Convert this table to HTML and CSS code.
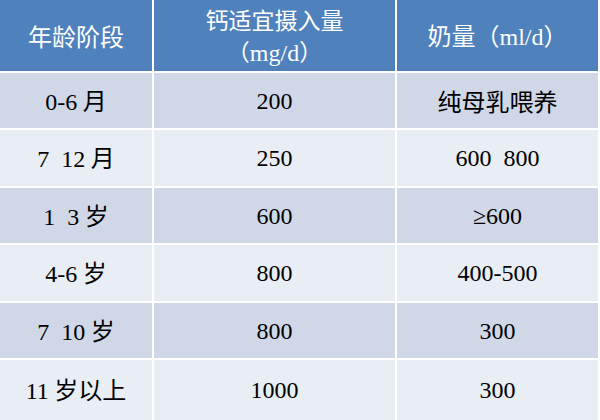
FILE: index.html
```html
<!DOCTYPE html>
<html>
<head>
<meta charset="utf-8">
<title>钙适宜摄入量</title>
<link rel="stylesheet" href="styles.css">
</head>
<body>
<div class="table">
  <div class="cell head"><span>年龄阶段</span></div>
  <div class="cell head two"><span>钙适宜摄入量<br>（<span class="num">mg/d</span>）</span></div>
  <div class="cell head"><span>奶量（<span class="num">ml/d</span>）</span></div>

  <div class="cell dark"><span><span class="num">0-6</span> 月</span></div>
  <div class="cell dark"><span class="num">200</span></div>
  <div class="cell dark"><span>纯母乳喂养</span></div>

  <div class="cell light"><span><span class="num">7&nbsp;&nbsp;12</span> 月</span></div>
  <div class="cell light"><span class="num">250</span></div>
  <div class="cell light"><span class="num">600&nbsp;&nbsp;800</span></div>

  <div class="cell dark"><span><span class="num">1&nbsp;&nbsp;3</span> 岁</span></div>
  <div class="cell dark"><span class="num">600</span></div>
  <div class="cell dark"><span class="num">≥600</span></div>

  <div class="cell light"><span><span class="num">4-6</span> 岁</span></div>
  <div class="cell light"><span class="num">800</span></div>
  <div class="cell light"><span class="num">400-500</span></div>

  <div class="cell dark"><span><span class="num">7&nbsp;&nbsp;10</span> 岁</span></div>
  <div class="cell dark"><span class="num">800</span></div>
  <div class="cell dark"><span class="num">300</span></div>

  <div class="cell light"><span><span class="num">11</span> 岁以上</span></div>
  <div class="cell light"><span class="num">1000</span></div>
  <div class="cell light"><span class="num">300</span></div>
</div>
</body>
</html>
```
FILE: styles.css
```css
html, body {
  margin: 0;
  padding: 0;
  background: #ffffff;
}

body {
  width: 600px;
  height: 420px;
  overflow: hidden;
  font-family: "Noto Sans CJK SC", sans-serif;
  font-size: 24px;
  color: #000000;
}

.table {
  display: grid;
  grid-template-columns: 152px 241px 201px;
  grid-template-rows: 71px 55px 56px 55px 56px 55px 60px;
  gap: 2px;
  width: 598px;
}

.cell {
  display: flex;
  align-items: center;
  justify-content: center;
  text-align: center;
  line-height: 30px;
}

.two {
  line-height: 32px;
  font-size: 23px;
}

.num {
  font-family: "Liberation Serif", "Times New Roman", serif;
  font-size: 24px;
}

.head {
  background: #4f81bd;
  color: #ffffff;
}

.dark {
  background: #d0d8e8;
}

.light {
  background: #e9edf4;
}
```
